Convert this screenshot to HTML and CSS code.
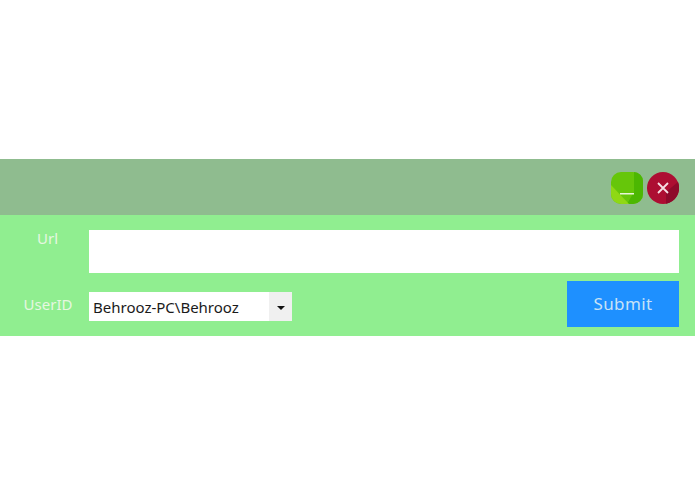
FILE: index.html
```html
<!DOCTYPE html>
<html lang="en">
<head>
    <meta charset="UTF-8">
    <meta name="viewport" content="width=device-width, initial-scale=1.0">
    <title>Submit Url</title>
    <link rel="stylesheet" href="styles.css">
</head>
<body>
    <div class="window">
        <div class="title-bar">
            <svg class="win-btn" width="32" height="32" viewBox="0 0 32 32">
                <rect width="32" height="32" rx="10" fill="#66c60a"/>
                <path d="M23 0a9 9 0 0 1 9 9v13a10 10 0 0 1-10 10H16L23 20z" fill="#4cb702"/>
                <path d="M0 13L18 32H10a10 10 0 0 1-10-10z" fill="#8fd815"/>
                <rect x="9" y="21" width="14" height="1.500" fill="#e8f5d8"/>
            </svg>
            <svg class="win-btn" width="32" height="32" viewBox="0 0 32 32">
                <circle cx="16" cy="16" r="16" fill="#ad0e32"/>
                <path d="M19 20L31 10A16 16 0 0 1 19 31.700z" fill="#8e0a2b"/>
                <path d="M11 11L21 21M21 11L11 21" stroke="#f6dfe4" stroke-width="1.800" fill="none"/>
            </svg>
        </div>
        <form class="url-form">
            <label class="field-label url-label" for="url">Url</label>
            <input class="url-input" type="text" id="url" name="url">
            <label class="field-label user-label" for="user">UserID</label>
            <div class="user-row">
                <div class="select-box" id="user">
                    <span class="select-value">Behrooz-PC\Behrooz</span>
                    <span class="select-arrow"></span>
                </div>
                <button class="submit-btn" type="button">Submit</button>
            </div>
        </form>
    </div>
</body>
</html>
```

FILE: styles.css
```css
body {
    margin: 0;
    padding-top: 159px;
    background-color: #fff;
    font-family: "Noto Sans", "Open Sans", sans-serif;
}
.title-bar {
    display: flex;
    justify-content: flex-end;
    align-items: center;
    gap: 4px;
    height: 55px;
    padding-top: 1px;
    padding-right: 16px;
    background-color: #8fbc8f;
}
.win-btn {
    display: block;
}
.url-form {
    display: grid;
    grid-template-columns: 73px 1fr;
    grid-template-rows: 43px 46px;
    row-gap: 8px;
    height: 121px;
    box-sizing: border-box;
    padding: 15px 16px 0 16px;
    background-color: #90ee90;
}
.field-label {
    justify-self: center;
    font-size: 15px;
    color: #e6f7e0;
}
.url-label {
    margin-left: -10px;
    margin-top: -2px;
}
.user-label {
    margin-left: -9px;
    margin-top: 13px;
}
.url-input {
    width: 100%;
    height: 43px;
    box-sizing: border-box;
    border: none;
    background-color: #fff;
}
.user-row {
    display: flex;
    justify-content: space-between;
    align-items: flex-start;
}
.select-box {
    display: flex;
    align-items: center;
    justify-content: space-between;
    width: 203px;
    height: 29px;
    margin-top: 11px;
    background-color: #fff;
}
.select-value {
    padding-left: 4px;
    font-size: 15px;
    color: #1a1a1a;
}
.select-arrow {
    display: flex;
    align-items: center;
    justify-content: center;
    width: 23px;
    height: 29px;
    background-color: #f0f0f0;
}
.select-arrow::after {
    content: "";
    margin-top: 2px;
    border-left: 4px solid transparent;
    border-right: 4px solid transparent;
    border-top: 4px solid #111;
}
.submit-btn {
    width: 112px;
    height: 46px;
    padding-bottom: 2px;
    border: none;
    background-color: #1e90ff;
    color: #c8e2f6;
    font-family: inherit;
    font-size: 17px;
    letter-spacing: 0.4px;
}
```
